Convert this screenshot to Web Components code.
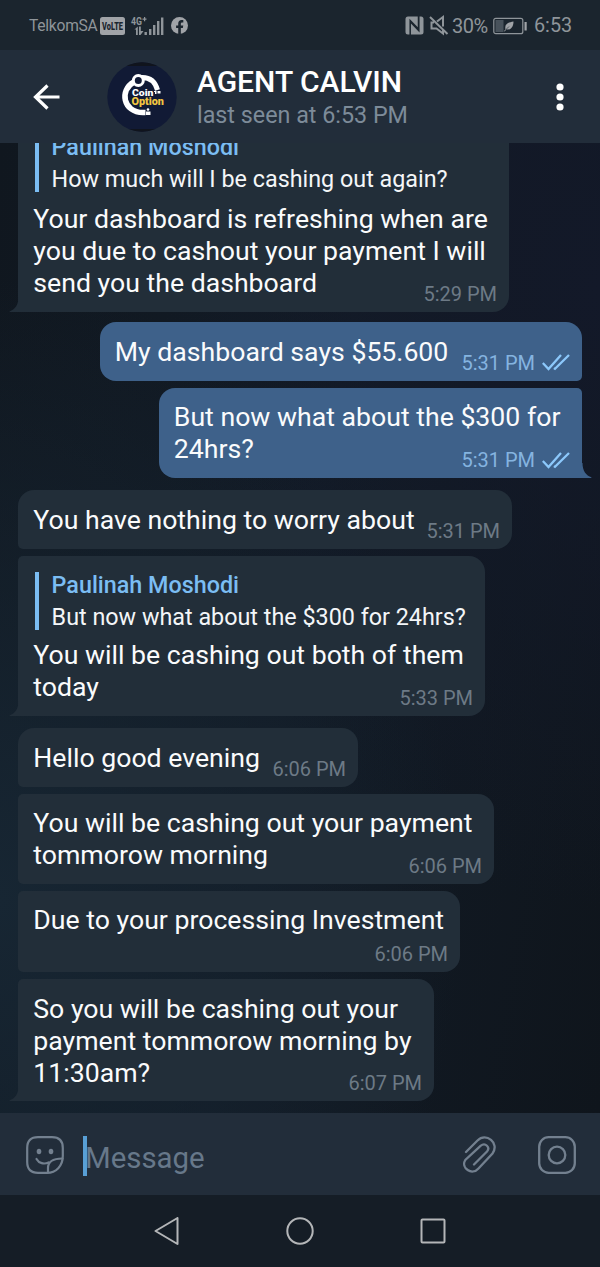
<!DOCTYPE html>
<html lang="en">
<head>
<meta charset="utf-8">
<title>Chat</title>
<style>
  body {
    margin: 0;
    width: 600px;
    height: 1267px;
    overflow: hidden;
    background: #151d26;
    font-family: Roboto, "Liberation Sans", sans-serif;
  }
</style>
</head>
<body>
<chat-app>
  <status-bar slot="top" carrier="TelkomSA" battery="30%" time="6:53"></status-bar>
  <chat-header slot="top" name="AGENT CALVIN" status="last seen at 6:53 PM"></chat-header>

  <chat-bubble tail time="5:29 PM" style="--w:491px; --h:194px">
    <reply-quote slot="quote" name="Paulinah Moshodi" style="--gap:12px">How much will I be cashing out again?</reply-quote>
    Your dashboard is refreshing when are<br>you due to cashout your payment I will<br>send you the dashboard
  </chat-bubble>
  <chat-bubble out first time="5:31 PM" style="--w:482px; --h:58.5px">My dashboard says $55.600</chat-bubble>
  <chat-bubble out tail time="5:31 PM" style="--w:423px; --h:90.5px">But now what about the $300 for<br>24hrs?</chat-bubble>
  <chat-bubble first time="5:31 PM" style="--w:494px; --h:58.5px">You have nothing to worry about</chat-bubble>
  <chat-bubble tail time="5:33 PM" style="--w:467px; --h:160.5px">
    <reply-quote slot="quote" name="Paulinah Moshodi">But now what about the $300 for 24hrs?</reply-quote>
    You will be cashing out both of them<br>today
  </chat-bubble>
  <chat-bubble first time="6:06 PM" style="--w:340px; --h:58.5px">Hello good evening</chat-bubble>
  <chat-bubble time="6:06 PM" style="--w:476px; --h:90px">You will be cashing out your payment<br>tommorow morning</chat-bubble>
  <chat-bubble time="6:06 PM" style="--w:442px; --h:81.5px">Due to your processing Investment</chat-bubble>
  <chat-bubble tail time="6:07 PM" style="--w:416px; --h:122px">So you will be cashing out your<br>payment tommorow morning by<br>11:30am?</chat-bubble>

  <message-composer slot="bottom" placeholder="Message"></message-composer>
  <nav-bar slot="bottom"></nav-bar>
</chat-app>

<script>
// Small base class: renders the template of the subclass into an open shadow root
class BaseElement extends HTMLElement {
  constructor() {
    super();
    this.attachShadow({ mode: 'open' });
  }

  connectedCallback() {
    this.shadowRoot.innerHTML = this.template();
  }

  attr(name) {
    return this.getAttribute(name) || '';
  }
}

// Page shell: bars on top, scrolled message list, composer at the bottom
class ChatApp extends BaseElement {
  template() {
    return `
      <style>
        :host {
          display: flex;
          flex-direction: column;
          height: 1267px;
        }
        main {
          flex: 1;
          min-height: 0;
          overflow: hidden;
          box-sizing: border-box;
          display: flex;
          flex-direction: column;
          justify-content: flex-end;
          padding: 0 18px 11.5px;
          background:
            radial-gradient(ellipse 440px 620px at 100% 15%, #131929 0%, #13192900 100%),
            radial-gradient(ellipse 460px 620px at 0% 78%, #172633 0%, #17263300 100%),
            linear-gradient(100deg, #10171f 0%, #121b26 50%, #0f151c 100%);
        }
      </style>
      <slot name="top"></slot>
      <main><slot></slot></main>
      <slot name="bottom"></slot>
    `;
  }
}

class StatusBar extends BaseElement {
  template() {
    return `
      <style>
        :host {
          display: flex;
          flex: none;
          align-items: center;
          box-sizing: border-box;
          height: 50px;
          padding: 1px 28px 0 29px;
          background: #1b252e;
          color: #8f959a;
          font-size: 17px;
          line-height: 20px;
        }
        svg { display: block; flex: none; overflow: visible; }
        .carrier { width: 71px; font-size: 15.6px; letter-spacing: -.25px; }
        .signal { margin-left: 6px; }
        .fb { margin-left: 6px; }
        .gap { flex: 1; }
        .battery { width: 37px; margin-left: 3px; font-size: 20px; letter-spacing: -.5px; }
        .time { margin-left: 6px; width: 38px; font-size: 19.8px; }
        .battery, .time { padding-top: 1px; }
      </style>
      <span class="carrier">${this.attr('carrier')}</span>
      <svg width="25" height="18" viewBox="0 0 25 18">
        <rect width="25" height="18" rx="2.500" fill="#a0a3a7"/>
        <text x="2" y="13" fill="#1b252e" font-size="11" font-weight="900" textLength="21" lengthAdjust="spacingAndGlyphs">VoLTE</text>
      </svg>
      <svg class="signal" width="34" height="22" viewBox="0 0 34 22" fill="#8f959a">
        <text x="0" y="9.500" font-size="11" font-weight="bold" textLength="11" lengthAdjust="spacingAndGlyphs">4G</text>
        <path d="M11.500 3.500h4v1.200h-4zM13 2h1.200v4.200H13z"/>
        <path d="M4 14L6.800 11.500V20H5v-5.500H3.500zM8 11.500h1.800V16H12.500L9.500 20H8z"/>
        <rect x="13.500" y="17" width="2.400" height="3"/>
        <rect x="18" y="14" width="2.400" height="6"/>
        <rect x="22" y="10" width="2.400" height="10"/>
        <rect x="26" y="6" width="2.400" height="14"/>
        <rect x="30" y="2.500" width="2.400" height="17.500"/>
      </svg>
      <svg class="fb" width="17" height="17" viewBox="0 0 24 24">
        <circle cx="12" cy="12" r="12" fill="#a0a3a7"/>
        <path d="M10.200 24v-8.400H7.200V12h3V9.300c0-3.200 1.900-4.900 4.700-4.900 1.300 0 2.500.2 2.500.2v3h-1.500c-1.500 0-2 .9-2 1.900V12h3.400l-.6 3.600h-2.800V24z" fill="#1b252e"/>
      </svg>
      <span class="gap"></span>
      <svg width="19" height="19" viewBox="0 0 19 19">
        <path d="M3 .500H16q2.500 0 2.500 2.500V16q0 2.500-2.500 2.500H3Q.500 18.500.500 16V3Q.500.500 3 .500z" fill="#8f959a"/>
        <path d="M5.200 19V4.600L13.500 13V0M13.800 0V14.600L5.500 6" fill="none" stroke="#1b252e" stroke-width="1.500"/>
      </svg>
      <svg style="margin-left:5px" width="20" height="19" viewBox="0 0 20 19" fill="none" stroke="#8f959a" stroke-width="2">
        <path d="M1 1L18.500 18M8 5.500L14 1V10.500M14 13.500V17.500L7.500 12.500H2.500V6.500H5"/>
      </svg>
      <span class="battery">${this.attr('battery')}</span>
      <svg style="margin-left:4px" width="35" height="18" viewBox="0 0 35 18">
        <rect x=".8" y="1.300" width="29" height="15.400" rx="2" fill="none" stroke="#8f959a" stroke-width="1.200"/>
        <rect x="2.500" y="3" width="8" height="12" fill="#48525b"/>
        <path d="M11 14q1.200-1 1.400-2C11.500 7 15 5.500 20.500 4.500 20.500 10 17.500 13.500 13.500 12.300L11.700 14.500z" fill="#a0a3a7"/>
        <path d="M12.500 13L16 9.500" stroke="#1b252e" stroke-width=".6"/>
        <rect x="31.500" y="5" width="2.200" height="8.500" fill="#a0a3a7"/>
      </svg>
      <span class="time">${this.attr('time')}</span>
    `;
  }
}

class ChatHeader extends BaseElement {
  template() {
    return `
      <style>
        :host {
          display: flex;
          flex: none;
          align-items: center;
          box-sizing: border-box;
          height: 93px;
          padding: 0 34px 0 33px;
          background: #222d3a;
        }
        svg { display: block; flex: none; }
        .avatar { margin-left: 47px; }
        .title { flex: 1; margin-left: 20px; padding-top: 2.500px; white-space: nowrap; }
        .name { color: #fff; font-size: 30px; font-weight: 500; line-height: 35px; }
        .status { color: #7d8b99; font-size: 23.3px; line-height: 33px; }
      </style>
      <svg width="27" height="26" viewBox="0 0 27 26" fill="none" stroke="#fff" stroke-width="3.200">
        <path d="M26.500 13H3M14.500 1.500L2.500 13l12 11.500"/>
      </svg>
      <svg class="avatar" width="70" height="70" viewBox="0 0 70 70">
        <defs><clipPath id="disc"><circle cx="35" cy="35" r="34.700"/></clipPath></defs>
        <g clip-path="url(#disc)">
          <rect width="70" height="70" fill="#111a35"/>
          <rect width="70" height="4" fill="#10141d"/>
          <rect y="67" width="70" height="3" fill="#10141d"/>
        </g>
        <path d="M27 20C12 28 16 50.500 36 50.500H38.500" fill="none" stroke="#fff" stroke-width="5.500"/>
        <path d="M34 15.500C42 15 48 19 50.500 28" fill="none" stroke="#fff" stroke-width="5"/>
        <circle cx="31.300" cy="18.500" r="5" fill="#111a35" stroke="#fff" stroke-width="3"/>
        <path d="M47 29h2.500v3H48v-2h-1zM50.500 29h3v2.500h-3z" fill="#fff"/>
        <g fill="#fff"><circle cx="41" cy="47.500" r="1.300"/><path d="M39 49.500h4.500V53H39z"/></g>
        <g font-family="Roboto" font-size="9.500" font-weight="900">
          <text x="25" y="34" fill="#fff" stroke="#111a35" stroke-width="2" paint-order="stroke" textLength="21.500" lengthAdjust="spacingAndGlyphs">Coin</text>
          <text x="24.500" y="42.500" font-size="10" fill="#f0c541" stroke="#111a35" stroke-width="2" paint-order="stroke" textLength="32.500" lengthAdjust="spacingAndGlyphs">Option</text>
        </g>
      </svg>
      <div class="title">
        <div class="name">${this.attr('name')}</div>
        <div class="status">${this.attr('status')}</div>
      </div>
      <svg width="12" height="28" viewBox="0 0 12 28" fill="#fff">
        <circle cx="6" cy="4" r="3.600"/><circle cx="6" cy="14" r="3.600"/><circle cx="6" cy="24" r="3.600"/>
      </svg>
    `;
  }
}

// Quoted message inside a bubble
class ReplyQuote extends BaseElement {
  template() {
    return `
      <style>
        :host {
          display: flex;
          flex-direction: column;
          box-sizing: border-box;
          height: 58.5px;
          margin: 1.500px 0 var(--gap, 9.500px) 1.500px;
          padding-left: 12.800px;
          border-left: 4px solid #7bbdf3;
          color: #f4f6f8;
          font-size: 23.330px;
          line-height: 32px;
          white-space: nowrap;
        }
        .name { margin-top: -2.500px; color: #7bbdf3; font-weight: 500; }
      </style>
      <div class="name">${this.attr('name')}</div>
      <div><slot></slot></div>
    `;
  }
}

// Message bubble; "out" flips it to the right, "first" rounds the top corner
class ChatBubble extends BaseElement {
  template() {
    const out = this.hasAttribute('out');
    const checks = `
      <svg width="28" height="17" viewBox="0 0 28 17" fill="none" stroke="#8cc8fb" stroke-width="2.300">
        <path d="M.800 9l5.700 6L19 1M12 14l1 .8L27 1"/>
      </svg>`;
    const tail = `
      <svg class="tail" width="10" height="15" viewBox="0 0 10 15">
        <path d="M10 0H9.500C9.500 8 6 12.500.500 14.200Q.200 15 1.500 15H10z" fill="${out ? '#3e618a' : '#222e39'}"/>
      </svg>`;
    return `
      <style>
        :host {
          --side: 15.300px;
          --top: 5px;
          --bottom: 5px;
          position: relative;
          display: flex;
          flex: none;
          flex-direction: column;
          box-sizing: border-box;
          width: var(--w);
          height: var(--h);
          margin-top: 7px;
          padding: 14.800px 12px 11.500px var(--side);
          border-radius: var(--top) 16px 16px var(--bottom);
          background: #222e39;
          color: #fafbfc;
        }
        :host([first]) { --top: 16px; margin-top: 12px; }
        :host([out][first]) { margin-top: 10.500px; }
        :host([tail]) { --bottom: 0px; }
        :host([out]) {
          --side: 14.800px;
          align-self: flex-end;
          border-radius: 16px var(--top) var(--bottom) 16px;
          background: #3e618a;
        }
        .body { flex: 1; display: grid; }
        .text, .meta { grid-area: 1 / 1; }
        .text { font-size: 26.670px; line-height: 31.900px; white-space: nowrap; }
        .meta {
          align-self: end;
          justify-self: end;
          display: flex;
          align-items: center;
          gap: 7px;
          margin-bottom: -5.500px;
          color: #6d7a86;
          font-size: 20px;
          line-height: 24px;
        }
        :host([out]) .meta { color: #85b4e0; }
        .tail { position: absolute; left: -9.500px; bottom: 0; }
        :host([out]) .tail { left: auto; right: -9.500px; transform: scaleX(-1); }
      </style>
      <slot name="quote"></slot>
      <div class="body">
        <div class="text"><slot></slot></div>
        <div class="meta"><span>${this.attr('time')}</span>${out ? checks : ''}</div>
      </div>
      ${this.hasAttribute('tail') ? tail : ''}
    `;
  }
}

class MessageComposer extends BaseElement {
  template() {
    return `
      <style>
        :host {
          display: flex;
          flex: none;
          align-items: center;
          box-sizing: border-box;
          height: 82px;
          padding: 2px 24px 0 26px;
          background: #222d3a;
          color: #67788a;
        }
        svg { display: block; flex: none; }
        .caret { width: 4px; height: 40px; margin: 3px 0 0 19px; background: #589fd6; }
        .field { flex: 1; margin: 7px 0 0 -2px; font-size: 29.400px; line-height: 36px; }
      </style>
      <svg width="38" height="38" viewBox="0 0 38 38" fill="none" stroke="#73808f" stroke-width="2.200" stroke-linecap="round" stroke-linejoin="round">
        <path d="M12 1.200H26Q36.800 1.200 36.800 12V20C36.800 30 30 36.800 21 36.800H12Q1.200 36.800 1.200 26V12Q1.200 1.200 12 1.200z"/>
        <path d="M22 36.500V32C22 26 26 22.500 36.500 22.500M10.500 23C13 27.500 18 28.500 22.500 26.500"/>
        <g fill="#73808f" stroke="none"><ellipse cx="13" cy="15.500" rx="2.300" ry="2.700"/><ellipse cx="25" cy="15.500" rx="2.300" ry="2.700"/></g>
      </svg>
      <span class="caret"></span>
      <span class="field">${this.attr('placeholder')}</span>
      <svg width="34" height="38" viewBox="0 0 34 38" fill="none" stroke="#73808f" stroke-width="2.300" stroke-linecap="round">
        <path d="M3 16L14.500 4.500C23-4 37 7 29.500 17.500L15.500 32.500C9 40-2.500 32 2.300 24L17.500 9.800C22.500 6 27.500 11.500 24 15.500L11 28.500"/>
      </svg>
      <svg style="margin-left:41px" width="38" height="38" viewBox="0 0 38 38" fill="none" stroke="#73808f" stroke-width="2.300">
        <rect x="1.200" y="1.200" width="35.600" height="35.600" rx="9.500"/>
        <circle cx="19" cy="19" r="8.300"/>
      </svg>
    `;
  }
}

// Android navigation buttons
class NavBar extends BaseElement {
  template() {
    return `
      <style>
        :host {
          display: flex;
          flex: none;
          justify-content: center;
          align-items: center;
          gap: 105px;
          box-sizing: border-box;
          height: 72.500px;
          background: #151d26;
        }
        svg { display: block; }
      </style>
      <svg width="28" height="28" viewBox="0 0 28 28" fill="none" stroke="#b4b6b8" stroke-width="2" stroke-linejoin="round">
        <path d="M2.500 14L24.500 1V27z"/>
      </svg>
      <svg width="28" height="28" viewBox="0 0 28 28" fill="none" stroke="#b4b6b8" stroke-width="2">
        <circle cx="14" cy="14" r="12.700"/>
      </svg>
      <svg width="28" height="28" viewBox="0 0 28 28" fill="none" stroke="#b4b6b8" stroke-width="2">
        <rect x="2.500" y="2.500" width="23" height="23" rx="1"/>
      </svg>
    `;
  }
}

customElements.define('chat-app', ChatApp);
customElements.define('status-bar', StatusBar);
customElements.define('chat-header', ChatHeader);
customElements.define('reply-quote', ReplyQuote);
customElements.define('chat-bubble', ChatBubble);
customElements.define('message-composer', MessageComposer);
customElements.define('nav-bar', NavBar);
</script>
</body>
</html>
